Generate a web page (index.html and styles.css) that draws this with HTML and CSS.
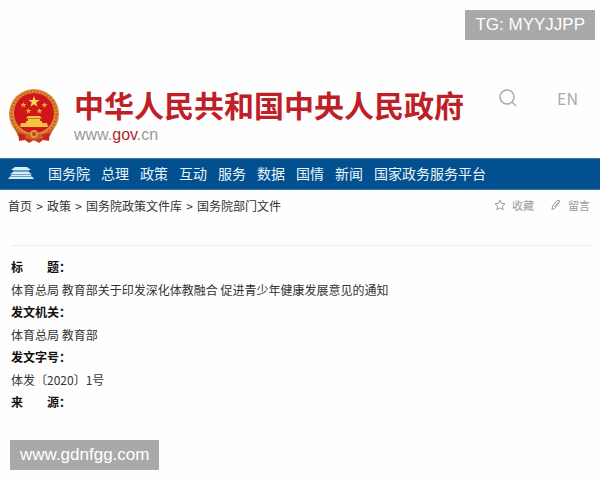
FILE: index.html
```html
<!DOCTYPE html>
<html lang="zh-CN">
<head>
  <meta charset="UTF-8">
  <meta name="viewport" content="width=device-width, initial-scale=1.0">
  <title>中华人民共和国中央人民政府</title>
  <link rel="stylesheet" href="styles.css">
</head>
<body>
  <div class="tag tag-top">TG: MYYJJPP</div>

  <!-- Header -->
  <header class="header">
    <svg class="emblem" viewBox="0 0 50 56" aria-hidden="true">
      <path d="M11 44L10 53l6-1 4 3 5-3 5 3 4-3 6 1-1-9z" fill="#c5391f"/>
      <ellipse cx="25" cy="26" rx="25" ry="25" fill="#d98a35"/>
      <ellipse cx="25" cy="26" rx="22.500" ry="22.500" fill="none" stroke="#c4551f" stroke-width="2" stroke-dasharray="1.500 2"/>
      <circle cx="25" cy="25" r="20" fill="#cf1719"/>
      <path d="M25 8l1.400 4h4.200l-3.400 2.600 1.300 4.100-3.500-2.500-3.500 2.500 1.300-4.100-3.400-2.600h4.200z" fill="#fbd85c"/>
      <g fill="#f0a83c">
        <path d="M14.500 14l.8 2.100h2.200l-1.800 1.300.7 2.200-1.900-1.300-1.900 1.300.7-2.200-1.800-1.300h2.200z"/>
        <path d="M35.500 14l.8 2.100h2.200l-1.800 1.300.7 2.200-1.900-1.300-1.900 1.300.7-2.200-1.800-1.300h2.200z"/>
        <path d="M19.500 20l.8 2.100h2.200l-1.800 1.300.7 2.200-1.900-1.300-1.900 1.300.7-2.200-1.800-1.300h2.200z"/>
        <path d="M30.500 20l.8 2.100h2.200l-1.800 1.300.7 2.200-1.900-1.300-1.900 1.300.7-2.200-1.800-1.300h2.200z"/>
      </g>
      <path d="M19 28h12l2 2.500H17zM19 31h12v2H19zM17 33h16v2h5l1 4H11l1-4h5z" fill="#f4c33f"/>
      <path d="M5 39q9 8 16 7l4-2 4 2q7 1 16-7l-4 9-9 1-7 4-7-4-9-1z" fill="#cf5a25"/>
      <path d="M9 45l8 2-2 4-5 1zM41 45l-8 2 2 4 5 1z" fill="#c4251c"/>
      <circle cx="25" cy="46" r="4" fill="#dd9a3d"/>
      <circle cx="25" cy="46" r="2" fill="#c4451f"/>
    </svg>
    <div class="brand">
      <h1>中华人民共和国中央人民政府</h1>
      <p>www.<span>gov</span>.cn</p>
    </div>
    <div class="tools">
      <button type="button" class="search" aria-label="搜索">
        <svg viewBox="0 0 18 18" aria-hidden="true"><circle cx="8" cy="8" r="7"/><path d="M13 13l4 4"/></svg>
      </button>
      <a href="#" class="lang">EN</a>
    </div>
  </header>

  <!-- Navigation -->
  <nav class="nav">
    <svg class="gate" viewBox="0 0 26 12" aria-hidden="true">
      <path d="M7 0h12l4 3H3zM5 3.500h16v1H5zM5 5h16l3 2.500H2zM3 8h20v1H3zM2 9.500h22l2 2.500H0z"/>
    </svg>
    <a href="#">国务院</a>
    <a href="#">总理</a>
    <a href="#">政策</a>
    <a href="#">互动</a>
    <a href="#">服务</a>
    <a href="#">数据</a>
    <a href="#">国情</a>
    <a href="#">新闻</a>
    <a href="#">国家政务服务平台</a>
  </nav>

  <!-- Breadcrumb -->
  <div class="subbar">
    <div class="crumbs">
      <a href="#">首页</a><span>&gt;</span><a href="#">政策</a><span>&gt;</span><a href="#">国务院政策文件库</a><span>&gt;</span><a href="#">国务院部门文件</a>
    </div>
    <div class="actions">
      <a href="#"><svg viewBox="0 0 12 12" aria-hidden="true"><path d="M6 1l1.500 3.300 3.500.4-2.600 2.400.7 3.500L6 8.900l-3.100 1.700.7-3.500L1 4.700l3.500-.4z"/></svg>收藏</a>
      <a href="#"><svg viewBox="0 0 12 12" aria-hidden="true"><path d="M2 10.500l.5-3.500 4.500-5.500h2.500L9 4l-4.500 5.500zM4.500 8L8 3.500"/></svg>留言</a>
    </div>
  </div>

  <!-- Document info -->
  <main class="doc">
    <dl>
      <dt>标　　题：</dt>
      <dd>体育总局 教育部关于印发深化体教融合 促进青少年健康发展意见的通知</dd>
      <dt>发文机关：</dt>
      <dd>体育总局 教育部</dd>
      <dt>发文字号：</dt>
      <dd>体发〔2020〕1号</dd>
      <dt>来　　源：</dt>
    </dl>
  </main>

  <div class="tag tag-bottom">www.gdnfgg.com</div>
</body>
</html>
```
FILE: styles.css
```css
* {
  margin: 0;
  padding: 0;
  box-sizing: border-box;
}

body {
  font-family: "Noto Sans CJK SC", sans-serif;
  font-size: 12px;
  background: #fefefe;
  color: #333;
  min-height: 100vh;
  position: relative;
}

a {
  color: inherit;
  text-decoration: none;
}

/* Corner tags */
.tag {
  position: absolute;
  height: 30px;
  padding: 0 10px;
  background: #a9a9a9;
  color: #fff;
  font-family: "Liberation Sans", Arial, sans-serif;
  font-size: 17px;
  line-height: 30px;
}

.tag-top {
  top: 10px;
  right: 5px;
}

.tag-bottom {
  left: 10px;
  bottom: 10px;
}

/* Header */
.header {
  display: flex;
  align-items: flex-start;
  padding: 82px 22px 14px 9px;
}

.emblem {
  width: 50px;
  height: 56px;
  margin: 6px 15px 0 0;
}

.brand h1 {
  color: #bd2027;
  font-size: 30px;
  font-weight: 700;
  line-height: 44px;
}

.brand p {
  color: #999;
  font-family: "Liberation Sans", Arial, sans-serif;
  font-size: 16px;
  line-height: 18px;
}

.brand span {
  color: #b0272d;
}

.tools {
  display: flex;
  align-items: center;
  gap: 40px;
  height: 32px;
  margin-left: auto;
}

.search {
  width: 18px;
  height: 18px;
  border: 0;
  background: none;
  cursor: pointer;
}

.search svg {
  display: block;
  fill: none;
  stroke: #aaa;
  stroke-width: 1.5;
}

.lang {
  color: #aaa;
  font-size: 16px;
}

/* Navigation */
.nav {
  display: flex;
  align-items: center;
  gap: 11px;
  height: 32px;
  padding: 0 8px 2px;
  background: #02508f;
  border-top: 1px solid #3c7cae;
  border-bottom: 1px solid #3c7cae;
  color: #e8f6fc;
  font-size: 14px;
}

.gate {
  width: 26px;
  height: 12px;
  margin-right: 3px;
  fill: #d4edf7;
}

/* Breadcrumb */
.subbar {
  display: flex;
  justify-content: space-between;
  align-items: center;
  height: 30px;
  padding: 0 10px 0 8px;
}

.crumbs {
  display: flex;
}

.crumbs span {
  width: 15px;
  text-align: center;
}

.actions {
  display: flex;
  gap: 16px;
  color: #999;
  font-size: 11px;
}

.actions a {
  display: flex;
  align-items: center;
  gap: 6px;
}

.actions svg {
  width: 12px;
  height: 12px;
  fill: none;
  stroke: #999;
}

/* Document info */
.doc {
  margin: 25px 8px 0 11px;
  padding-top: 10px;
  border-top: 1px solid #eee;
}

.doc dt {
  color: #111;
  font-weight: 700;
  line-height: 22px;
}

.doc dd {
  line-height: 23px;
}
```
